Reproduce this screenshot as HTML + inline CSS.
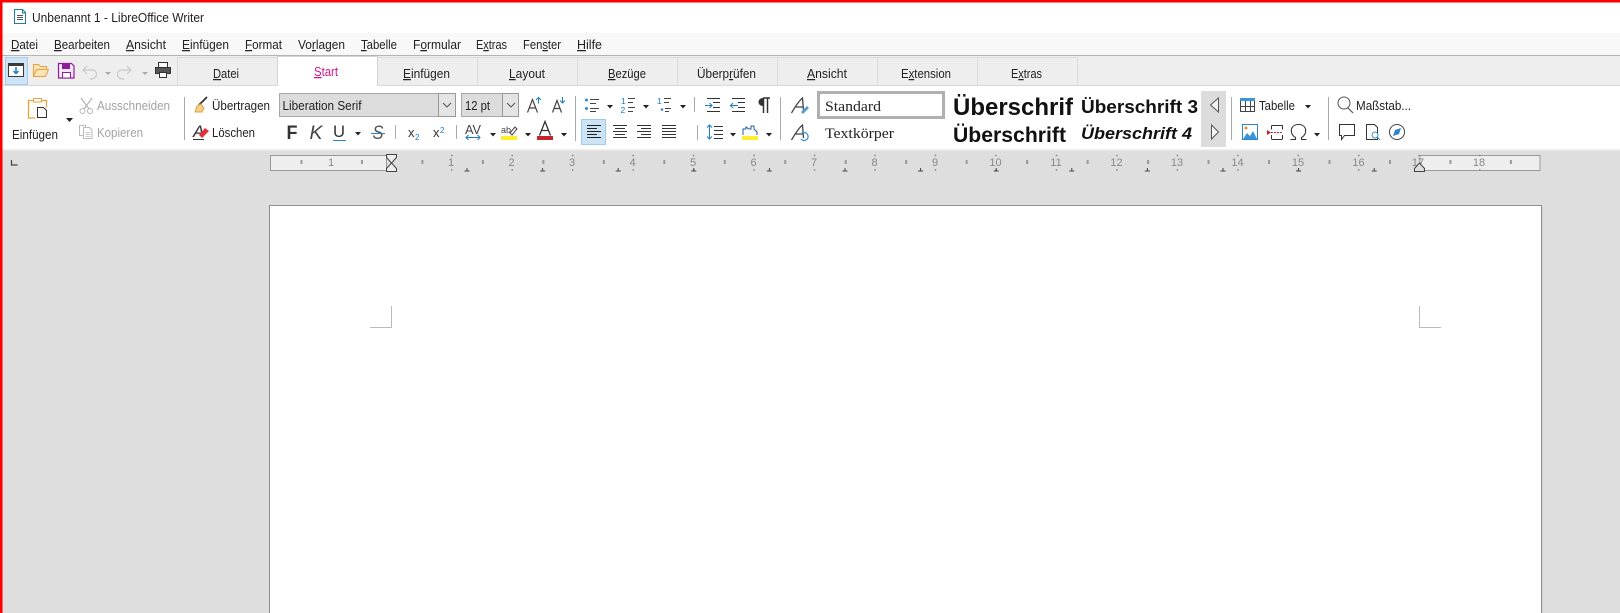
<!DOCTYPE html>
<html><head><meta charset="utf-8"><style>
html,body{margin:0;padding:0;background:#dedede;width:1620px;height:613px;overflow:hidden}
svg{display:block}
text{font-family:"Liberation Sans",sans-serif;font-size:12.5px;fill:#222}
.g{fill:#a3a3a3}
.s{font-family:"Liberation Serif",serif}
.r{font-size:11px;fill:#888;text-anchor:middle}
.sep{stroke:#aaa;stroke-width:1}
.d{fill:#222}
</style></head><body>
<svg width="1620" height="613" viewBox="0 0 1620 613" xmlns="http://www.w3.org/2000/svg">
<rect width="1620" height="613" fill="#dedede"/>
<!-- title + menu -->
<rect x="0" y="0" width="1620" height="33" fill="#fff"/>
<rect x="0" y="33" width="1620" height="22" fill="#f8f8f8"/>
<rect x="0" y="55" width="1620" height="1" fill="#b4b4b4"/>
<rect x="0" y="56" width="1620" height="30" fill="#eeeeee"/>
<rect x="0" y="85" width="1620" height="1" fill="#d8d8d8"/>
<rect x="0" y="86" width="1620" height="63" fill="#fff"/>
<rect x="0" y="149" width="1620" height="1.5" fill="#f0f0f0"/>
<path d="M14.5 9.500h8l3 3v11h-11z" fill="#fff" stroke="#1c7ea0"/><path d="M17 15.500h6M17 17.500h6M17 19.500h6" stroke="#555"/><path d="M22.500 9.500v3.500h3" fill="none" stroke="#1c7ea0"/>
<text x="32" y="22" textLength="172" lengthAdjust="spacingAndGlyphs">Unbenannt 1 - LibreOffice Writer</text>
<g>
<text x="11" y="49" textLength="27" lengthAdjust="spacingAndGlyphs"><tspan text-decoration="underline">D</tspan>atei</text>
<text x="54" y="49" textLength="56" lengthAdjust="spacingAndGlyphs"><tspan text-decoration="underline">B</tspan>earbeiten</text>
<text x="126" y="49" textLength="40" lengthAdjust="spacingAndGlyphs"><tspan text-decoration="underline">A</tspan>nsicht</text>
<text x="182" y="49" textLength="47" lengthAdjust="spacingAndGlyphs"><tspan text-decoration="underline">E</tspan>infügen</text>
<text x="245" y="49" textLength="37" lengthAdjust="spacingAndGlyphs"><tspan text-decoration="underline">F</tspan>ormat</text>
<text x="298" y="49" textLength="47" lengthAdjust="spacingAndGlyphs">Vo<tspan text-decoration="underline">r</tspan>lagen</text>
<text x="361" y="49" textLength="36" lengthAdjust="spacingAndGlyphs"><tspan text-decoration="underline">T</tspan>abelle</text>
<text x="413" y="49" textLength="48" lengthAdjust="spacingAndGlyphs">F<tspan text-decoration="underline">o</tspan>rmular</text>
<text x="476" y="49" textLength="31" lengthAdjust="spacingAndGlyphs">E<tspan text-decoration="underline">x</tspan>tras</text>
<text x="523" y="49" textLength="38" lengthAdjust="spacingAndGlyphs">Fen<tspan text-decoration="underline">s</tspan>ter</text>
<text x="577" y="49" textLength="25" lengthAdjust="spacingAndGlyphs"><tspan text-decoration="underline">H</tspan>ilfe</text>
</g>
<!-- tabs -->
<path d="M177.500 85V57.500H1077.500V85M377.500 57V85M477.500 57V85M577.500 57V85M677.500 57V85M777.500 57V85M877.500 57V85M977.500 57V85" fill="none" stroke="#dcdcdc"/>
<rect x="277" y="56" width="101" height="30" fill="#fff"/><path d="M277.500 86V56.500H377.500V86" fill="none" stroke="#d4d4d4"/>
<text x="213" y="78" textLength="26" lengthAdjust="spacingAndGlyphs"><tspan text-decoration="underline">D</tspan>atei</text>
<text x="314" y="76" textLength="24" lengthAdjust="spacingAndGlyphs" style="fill:#d6148c"><tspan text-decoration="underline">S</tspan>tart</text>
<text x="403" y="78" textLength="47" lengthAdjust="spacingAndGlyphs"><tspan text-decoration="underline">E</tspan>infügen</text>
<text x="509" y="78" textLength="36" lengthAdjust="spacingAndGlyphs"><tspan text-decoration="underline">L</tspan>ayout</text>
<text x="608" y="78" textLength="38" lengthAdjust="spacingAndGlyphs"><tspan text-decoration="underline">B</tspan>ezüge</text>
<text x="697" y="78" textLength="59" lengthAdjust="spacingAndGlyphs">Überp<tspan text-decoration="underline">r</tspan>üfen</text>
<text x="807" y="78" textLength="40" lengthAdjust="spacingAndGlyphs"><tspan text-decoration="underline">A</tspan>nsicht</text>
<text x="901" y="78" textLength="50" lengthAdjust="spacingAndGlyphs">E<tspan text-decoration="underline">x</tspan>tension</text>
<text x="1011" y="78" textLength="31" lengthAdjust="spacingAndGlyphs">E<tspan text-decoration="underline">x</tspan>tras</text>
<!-- quick access -->
<rect x="5.500" y="57.500" width="22" height="27" fill="#cde4f7" stroke="#a5cdec"/>
<rect x="8.500" y="63.500" width="15" height="13" fill="#fff" stroke="#3a3a3a"/><rect x="8" y="63" width="16" height="3" fill="#3a3a3a"/><path d="M16 67v6M13.500 71l2.500 2.500 2.500-2.500" fill="none" stroke="#1a7cc4" stroke-width="1.500"/>
<path d="M33.500 76.500V64.500h5l2 2h6v3M33.500 76.500l3-7h12l-3 7z" fill="#fbe3b8" stroke="#e8a33d"/>
<path d="M58.500 63.500h13l2.500 2.500v12h-15.500z" fill="#f5e6f5" stroke="#8e1e9a" stroke-width="1.200"/><rect x="62" y="64" width="8" height="5" fill="#8e1e9a"/><rect x="62.500" y="72.500" width="8" height="5.500" fill="#fff" stroke="#8e1e9a"/>
<path d="M83 70l4-4M83 70l4 4M83 70h9c6 0 6 8 0 9h-2" fill="none" stroke="#c8c8c8" stroke-width="1.200"/>
<path d="M131 70l-4-4M131 70l-4 4M131 70h-9c-6 0-6 8 0 9h2" fill="none" stroke="#c8c8c8" stroke-width="1.200"/>
<path d="M105 72h6l-3 3zM142 72h6l-3 3z" fill="#aaa"/>
<path d="M158.500 68v-5.500h9v5.500" fill="#fff" stroke="#333"/><rect x="155.500" y="67.500" width="15" height="6" fill="#555" stroke="#333"/><rect x="159.500" y="72.500" width="7" height="5" fill="#fff" stroke="#333"/>
<!-- paste -->
<path d="M33 100.500h-4.500v17.500h7M42 100.500h4.500v7" fill="none" stroke="#e8a33d" stroke-width="1.300"/><rect x="33.500" y="98.500" width="8" height="3.500" fill="#fff" stroke="#e8a33d"/>
<path d="M37.500 107.500h6l3 3v7h-9z" fill="#fff" stroke="#333"/>
<text x="12" y="139" textLength="46" lengthAdjust="spacingAndGlyphs">Einfügen</text>
<path d="M66 118h7l-3.500 4z" class="d"/>
<path d="M81 98l8 11M92 98l-8 11" stroke="#b5b5b5" stroke-width="1.200"/><circle cx="82.500" cy="111" r="2.500" fill="none" stroke="#b5b5b5"/><circle cx="90" cy="111" r="2.500" fill="none" stroke="#b5b5b5"/>
<text x="97" y="110" textLength="73" lengthAdjust="spacingAndGlyphs" class="g">Ausschneiden</text>
<path d="M79.500 125.500h6v10h-6z" fill="#fff" stroke="#bbb"/><path d="M83.500 127.500h6l2.500 2.500v8.500h-8.500z" fill="#fff" stroke="#bbb"/><path d="M85.500 132.500h5M85.500 134.500h5M85.500 136.500h5" stroke="#ccc"/>
<text x="97" y="137" textLength="46" lengthAdjust="spacingAndGlyphs" class="g">Kopieren</text>
<line x1="184.500" y1="97" x2="184.500" y2="140" class="sep"/>
<path d="M199 105l8-8" stroke="#333" stroke-width="1.800"/><path d="M195 112l2-6 4-2 3 4-2 4z" fill="#f5d08a" stroke="#e0a040"/>
<text x="212" y="110" textLength="58" lengthAdjust="spacingAndGlyphs">Übertragen</text>
<text x="193" y="137" style="font-size:17px;font-style:italic;fill:#333">A</text><path d="M199 135l6-7 4 3-7 7z" fill="#e3303b"/><path d="M193 139.500h11" stroke="#333"/>
<text x="212" y="137" textLength="43" lengthAdjust="spacingAndGlyphs">Löschen</text>
<!-- font box -->
<rect x="279.500" y="93.500" width="176" height="23" fill="#dcdcdc" stroke="#a8a8a8"/>
<rect x="438.500" y="93.500" width="17" height="23" fill="#e4e4e4" stroke="#999"/><path d="M443 103l4 4 4-4" fill="none" stroke="#555"/>
<text x="282.500" y="110" textLength="79" lengthAdjust="spacingAndGlyphs">Liberation Serif</text>
<rect x="461.500" y="93.500" width="57" height="23" fill="#dcdcdc" stroke="#a8a8a8"/>
<rect x="502.500" y="93.500" width="16" height="23" fill="#e4e4e4" stroke="#999"/><path d="M507 103l4 4 4-4" fill="none" stroke="#555"/>
<text x="465" y="110" textLength="25" lengthAdjust="spacingAndGlyphs">12 pt</text>
<path d="M527.500 112.500l5-13 5 13M529.500 108h6" fill="none" stroke="#444" stroke-width="1.200"/><path d="M538.500 103.500v-6M536 100l2.500-2.500 2.500 2.500" fill="none" stroke="#1a7cc4"/>
<path d="M552.500 112.500l4.500-12 4.500 12M554.500 108.500h5" fill="none" stroke="#444" stroke-width="1.200"/><path d="M562.500 97v6M560 100.500l2.500 2.500 2.500-2.500" fill="none" stroke="#1a7cc4"/>
<line x1="575.500" y1="96" x2="575.500" y2="141" class="sep"/>
<!-- row 2 -->
<text x="286.500" y="139" textLength="11" lengthAdjust="spacingAndGlyphs" style="font-size:19px;font-weight:bold;fill:#333">F</text>
<text x="309.500" y="139" textLength="13" lengthAdjust="spacingAndGlyphs" style="font-size:19px;font-style:italic;fill:#444">K</text>
<text x="333" y="137" textLength="12" lengthAdjust="spacingAndGlyphs" style="font-size:17px;fill:#333">U</text><path d="M333 140.500h13" stroke="#2a86b8"/>
<path d="M355 132h6l-3 3.500z" class="d"/>
<text x="372.500" y="139" textLength="11" lengthAdjust="spacingAndGlyphs" style="font-size:19px;font-style:italic;fill:#555">S</text><path d="M371 133.500h14" stroke="#2a86b8"/>
<line x1="395.500" y1="125" x2="395.500" y2="139" class="sep"/>
<text x="408" y="137" style="font-size:13px;fill:#333">x</text><text x="415" y="140" style="font-size:8px;fill:#1a7cc4">2</text>
<text x="433" y="137" style="font-size:13px;fill:#333">x</text><text x="440" y="133" style="font-size:8px;fill:#1a7cc4">2</text>
<line x1="456.500" y1="125" x2="456.500" y2="139" class="sep"/>
<text x="465" y="134" textLength="16" lengthAdjust="spacingAndGlyphs" style="font-size:13px;fill:#444">AV</text><path d="M466 137.500h14M468.500 135l-2.500 2.500 2.500 2.500M477.500 135l2.500 2.500-2.500 2.500" fill="none" stroke="#1a7cc4"/>
<path d="M490 133h6l-3 3.500z" class="d"/>
<text x="501" y="133" style="font-size:9px;fill:#444">ab</text><path d="M510 133l5-6 2 2-5 6z" fill="#fff" stroke="#444"/><rect x="501" y="136" width="16" height="4" fill="#ffef2b"/>
<path d="M525 133h6l-3 3.500z" class="d"/>
<path d="M539.500 135.500l5.500-14 5.500 14M541.500 130.500h7" fill="none" stroke="#333" stroke-width="1.300"/><rect x="537" y="136" width="16" height="4" fill="#c4252a"/>
<path d="M561 133h6l-3 3.500z" class="d"/>
<!-- lists -->
<path d="M590 99.500h9M590 103.500h6M590 108.500h9M590 111.500h6" stroke="#444"/>
<circle cx="586.500" cy="100" r="1.500" fill="#2a8cd0"/><circle cx="586.500" cy="108.500" r="1.500" fill="#2a8cd0"/>
<text x="621" y="104" style="font-size:8.500px;fill:#1a7cc4">1</text><text x="620.500" y="113" style="font-size:8.500px;fill:#1a7cc4">2</text>
<path d="M628 98.500h7M628 102.500h5M628 107.500h7M628 111.500h5" stroke="#444"/>
<text x="657" y="104" style="font-size:8.500px;fill:#1a7cc4">1</text><circle cx="662" cy="109.500" r="1.300" fill="#2a8cd0"/>
<path d="M664 98.500h7M664 102.500h5M665 108.500h6M665 111.500h4" stroke="#444"/>
<path d="M607 105h6l-3 3.500zM643 105h6l-3 3.500zM680 105h6l-3 3.500z" class="d"/>
<line x1="694.500" y1="97" x2="694.500" y2="112" class="sep"/>
<path d="M707 98.500h13M713 102.500h7M713 107.500h7M707 111.500h13M732 98.500h13M738 102.500h7M738 107.500h7M732 111.500h13" stroke="#333"/>
<path d="M705 105.500h7M709.500 103l2.500 2.500-2.500 2.500M738 105.500h-7.500M733 103l-2.500 2.500 2.500 2.500" fill="none" stroke="#1a7cc4"/>
<path d="M763 98h7M763.500 98v15M767.500 98v15" stroke="#333" stroke-width="1.500"/><path d="M763 98c-6 0-6 8 0 8z" fill="#333"/>
<line x1="780.500" y1="97" x2="780.500" y2="140" class="sep"/>
<!-- align -->
<rect x="581.500" y="119.500" width="24" height="25" fill="#cde4f7" stroke="#9fcbee"/>
<path d="M587 125.500h14M587 128.500h10M587 131.500h14M587 134.500h10M587 137.500h14" stroke="#222"/>
<path d="M613 125.500h14M615 128.500h10M613 131.500h14M615 134.500h10M613 137.500h14" stroke="#333"/>
<path d="M637 125.500h14M641 128.500h10M637 131.500h14M641 134.500h10M637 137.500h14" stroke="#333"/>
<path d="M662 125.500h14M662 128.500h14M662 131.500h14M662 134.500h14M662 137.500h14" stroke="#333"/>
<line x1="697.500" y1="125" x2="697.500" y2="140" class="sep"/>
<path d="M709.500 125v14M707 127.500l2.500-2.500 2.500 2.500M707 136.500l2.500 2.500 2.500-2.500" fill="none" stroke="#1a7cc4"/>
<path d="M714 126.500h9M714 130.500h9M714 134.500h9M714 138.500h9" stroke="#333"/>
<path d="M730 133h6l-3 3.500z" class="d"/>
<path d="M743 135v-6h3v-2l3 2h2v-3h3v3l3 3v3" fill="none" stroke="#1a5f9e"/><rect x="742" y="136" width="16" height="4" fill="#ffef2b"/>
<path d="M766 133h6l-3 3.500z" class="d"/>
<!-- style icons -->
<path d="M791.500 113c3-5 7-12 11-15l1 13M795 107h8" fill="none" stroke="#444" stroke-width="1.300"/><path d="M801 112l6-6 2 2-6 6z" fill="#5a9bd0"/>
<path d="M791.500 140c3-5 7-12 11-15l1 13M795 134h8" fill="none" stroke="#444" stroke-width="1.300"/><path d="M801 134a4 4 0 1 1 0 5" fill="none" stroke="#3a8fd0" stroke-width="1.300"/>
<!-- style gallery -->
<rect x="818.500" y="92.500" width="125" height="25" fill="#fff" stroke="#b0b0b0" stroke-width="3"/>
<text x="825" y="111" textLength="56" lengthAdjust="spacingAndGlyphs" class="s" style="font-size:15px">Standard</text>
<text x="825" y="138" textLength="69" lengthAdjust="spacingAndGlyphs" class="s" style="font-size:15px">Textkörper</text>
<text x="953" y="115" textLength="120" lengthAdjust="spacingAndGlyphs" style="font-size:24.500px;font-weight:bold;fill:#111">Überschrif</text>
<text x="953" y="142" textLength="113" lengthAdjust="spacingAndGlyphs" style="font-size:21px;font-weight:bold;fill:#111">Überschrift</text>
<text x="1081" y="113" textLength="117" lengthAdjust="spacingAndGlyphs" style="font-size:18.500px;font-weight:bold;fill:#111">Überschrift 3</text>
<text x="1081" y="139" textLength="111" lengthAdjust="spacingAndGlyphs" style="font-size:17px;font-weight:bold;font-style:italic;fill:#111">Überschrift 4</text>
<rect x="1201" y="91" width="25" height="56" fill="#dcdcdc"/>
<path d="M1218.500 98v14l-8-7zM1211.500 125v14l7-7z" fill="#f4f4f4" stroke="#555"/>
<line x1="1231.500" y1="97" x2="1231.500" y2="140" class="sep"/>
<!-- table etc -->
<rect x="1240.500" y="98.500" width="14" height="13" fill="#fff" stroke="#444"/><rect x="1240" y="98" width="15" height="3" fill="#3a96dc"/><path d="M1245.500 101v10M1250.500 101v10M1241 106.500h13" stroke="#444"/>
<text x="1259" y="110" textLength="36" lengthAdjust="spacingAndGlyphs">Tabelle</text>
<path d="M1305 105h6l-3 3.500z" class="d"/>
<line x1="1328.500" y1="97" x2="1328.500" y2="140" class="sep"/>
<circle cx="1344" cy="103" r="6" fill="none" stroke="#555"/><path d="M1348 108l5 5" stroke="#555" stroke-width="1.200"/>
<text x="1356" y="110" textLength="55" lengthAdjust="spacingAndGlyphs">Maßstab...</text>
<rect x="1242.500" y="124.500" width="15" height="15" fill="#fff" stroke="#2a86c8"/><path d="M1243 139l4-6 3 3 3-5 4 8z" fill="#3a96dc"/><circle cx="1246" cy="128" r="1.500" fill="#ec8b2e"/>
<path d="M1271.500 125.500h11M1271.500 139.500h11M1271.500 125.500v4M1282.500 125.500v4M1271.500 135v4M1282.500 135v4" stroke="#333" fill="none"/><path d="M1271 132.500h12" stroke="#c4252a" stroke-dasharray="2 1"/><path d="M1267 130l4 2.500-4 2.500z" fill="#c4252a"/>
<path d="M1290.500 139.500h5v-2c-6-3-6-13 3-13s9 10 3 13v2h5" fill="none" stroke="#333" stroke-width="1.100"/>
<path d="M1314 133h6l-3 3.500z" class="d"/>
<path d="M1339.500 124.500h15v11h-10l-3 4v-4h-2z" fill="#fff" stroke="#333"/>
<path d="M1366.500 124.500h8l3 3v12h-11z" fill="#fff" stroke="#333"/><circle cx="1375" cy="135" r="3" fill="#fff" stroke="#3a8fc4"/><path d="M1377 137l3 3" stroke="#3a8fc4"/>
<circle cx="1397" cy="132" r="7.500" fill="#fff" stroke="#444"/><path d="M1393 136l2-6 6-2-2 6z" fill="#2a86c8"/>
<!-- ruler -->
<path d="M11.500 160v5h6" fill="none" stroke="#444" stroke-width="1.200"/>
<rect x="270.500" y="155.500" width="116" height="15" fill="#eeeeee" stroke="#999"/>
<rect x="1420" y="155.500" width="120" height="15" fill="#eeeeee" stroke="#999"/>
<path d="M300.500 162H1520" stroke="#999" stroke-width="4" stroke-dasharray="2 58.470" fill="none"/>
<path d="M451 155.500H1490" stroke="#888" stroke-width="1.500" stroke-dasharray="1.500 58.970" fill="none"/>
<path d="M451 170H1490" stroke="#888" stroke-width="1.500" stroke-dasharray="1.500 58.970" fill="none"/>
<path d="M464.500 171H1380" stroke="#444" stroke-dasharray="5 70.600" fill="none"/>
<path d="M466.500 169.500H1380" stroke="#444" stroke-width="3" stroke-dasharray="1 74.600" fill="none"/>
<text x="331" y="166" class="r">1</text>
<text x="451" y="166" class="r">1</text><text x="511.500" y="166" class="r">2</text><text x="572" y="166" class="r">3</text><text x="632.500" y="166" class="r">4</text><text x="693" y="166" class="r">5</text><text x="753.500" y="166" class="r">6</text><text x="814" y="166" class="r">7</text><text x="874.500" y="166" class="r">8</text><text x="935" y="166" class="r">9</text><text x="995.500" y="166" class="r">10</text><text x="1056" y="166" class="r">11</text><text x="1116.500" y="166" class="r">12</text><text x="1177" y="166" class="r">13</text><text x="1237.500" y="166" class="r">14</text><text x="1298" y="166" class="r">15</text><text x="1358.500" y="166" class="r">16</text><text x="1418" y="166" class="r">17</text><text x="1479" y="166" class="r">18</text>
<path d="M386.500 154.500h10v3l-5 5.500 5 5.500v3h-10v-3l5-5.500-5-5.500z" fill="#eee" stroke="#444"/>
<path d="M1414.500 171.500v-3l5-5.500 5 5.500v3z" fill="#dedede" stroke="#444"/>
<!-- page -->
<rect x="269.500" y="205.500" width="1272" height="420" fill="#fff" stroke="#8f8f8f"/>
<path d="M1542.500 207v406" stroke="#d2d2d2"/>
<path d="M370 327.500h21.500V306M1441 327.500h-21.500V306" fill="none" stroke="#bbb"/>
<!-- red frame -->
<rect x="0" y="0" width="1620" height="2.500" fill="#f00"/>
<rect x="0" y="0" width="2.500" height="613" fill="#f00"/>
</svg>
</body></html>
